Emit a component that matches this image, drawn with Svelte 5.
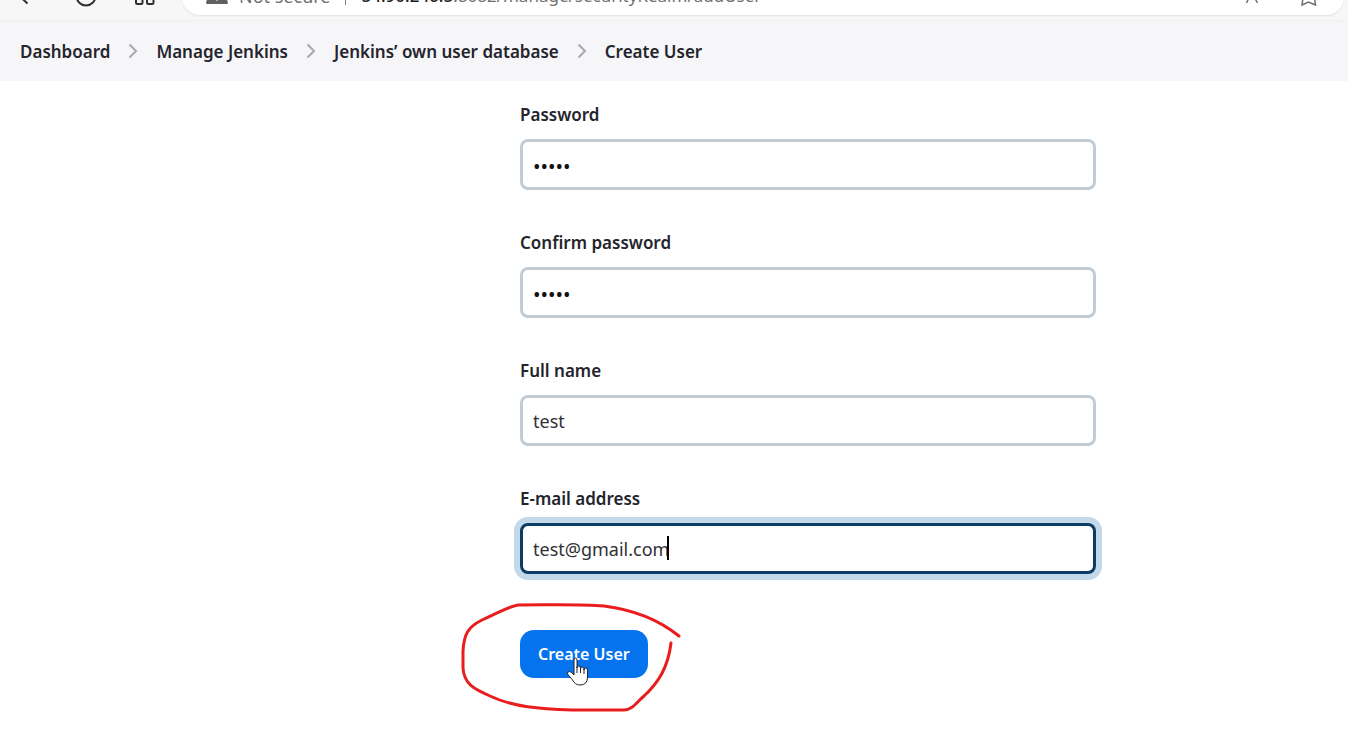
<script>
  const crumbs = ['Dashboard', 'Manage Jenkins', 'Jenkins’ own user database', 'Create User'];
  let password = $state('admin');
  let confirm = $state('admin');
  let fullName = $state('test');
  let email = $state('test@gmail.com');
</script>

<div class="page">
  <div class="browser">
    <div class="tools">
      <button aria-label="Back"><svg width="24" height="20" viewBox="0 0 24 20"><path d="M13.500 -7 6 -2.500 12.500 3.500" /></svg></button>
      <button aria-label="Refresh"><svg width="24" height="20" viewBox="0 0 24 20"><circle cx="12" cy="-4" r="9.500" /></svg></button>
      <button aria-label="Apps"><svg width="24" height="20" viewBox="0 0 24 20"><rect x="3" y="-5" width="6.500" height="9" rx="1.500" /><rect x="14" y="-5" width="6.500" height="9" rx="1.500" /></svg></button>
    </div>
    <div class="address">
      <svg class="warn" width="22" height="16" viewBox="0 0 22 16"><path d="M1 5Q-.5 5 .5 2L3-4H19L21.500 2Q22.500 5 21 5Z" /><circle cx="11" cy="0" r="1.500" fill="#fff" /></svg>
      <span class="secure">Not secure</span>
      <span class="bar"></span>
      <span class="url"><b>54.90.246.5</b>:8082/manage/securityRealm/addUser</span>
      <button class="read" aria-label="Read aloud"><svg width="24" height="15" viewBox="0 0 24 15"><path d="M6.500 3 11.500 -8 17.500 3" /></svg></button>
      <button aria-label="Add to favorites"><svg width="24" height="15" viewBox="0 0 24 15"><path d="M6 -2 5 5 11.500 2 18.500 5 17.500 -2" /></svg></button>
    </div>
  </div>

  <nav aria-label="Breadcrumb">
    {#each crumbs as crumb, i}
      {#if i > 0}
        <svg width="10" height="16" viewBox="0 0 10 16"><path d="M1.500 1.500 8 8 1.500 14.500" /></svg>
      {/if}
      <a href="#top">{crumb}</a>
    {/each}
  </nav>

  <main>
    <form onsubmit={(e) => e.preventDefault()}>
      <div class="field">
        <label for="password">Password</label>
        <input id="password" type="password" autocomplete="off" bind:value={password} />
      </div>
      <div class="field">
        <label for="confirm">Confirm password</label>
        <input id="confirm" type="password" autocomplete="off" bind:value={confirm} />
      </div>
      <div class="field">
        <label for="fullname">Full name</label>
        <input id="fullname" type="text" bind:value={fullName} />
      </div>
      <div class="field">
        <label for="email">E-mail address</label>
        <div class="active">
          <input id="email" type="text" bind:value={email} />
          <span class="caret"></span>
        </div>
      </div>
      <div class="submit">
        <button type="submit">Create User</button>
        <svg class="ring" width="226" height="112" viewBox="0 0 226 112"><path d="M219 35C199 19 176 9 144 5C120 3 90 4 59 4C49 5 40 11 22 19C8 26 4 33 3 50V67C4 83 14 88 30 95C53 106 80 108 112 109H164C172 109 176 102 184 95C198 82 208 67 211 42" /></svg>
        <svg class="hand" width="24" height="30" viewBox="0 0 24 30"><path d="M8 16V3Q8 1 9.500 1T11 3V11Q11 9 12.800 9T14.500 11V12Q14.500 10 16.300 10T18 12V13Q18 11 19.700 11T21.500 13V20Q21.500 28 14 28Q9 28 6.500 23L1.500 17Q1 14.500 3.500 14.500Q5 14.500 8 18Z" /><path d="M11 10V16M14.500 11V16M18 12V17" /></svg>
      </div>
    </form>
  </main>
</div>

<style>
  :global(body) {
    margin: 0;
    background: #fff;
  }
  .page {
    min-height: 100vh;
    font-family: "Noto Sans", "Open Sans", sans-serif;
    font-size: 18px;
    color: #24242c;
  }
  button {
    font: inherit;
    border: 0;
    padding: 0;
    background: none;
  }
  .browser {
    display: flex;
    height: 20px;
    padding-right: 4px;
    overflow: hidden;
    background: #f7f7f7;
    border-bottom: 1px solid #f0f0f1;
  }
  .browser svg {
    display: block;
    fill: none;
    stroke: #303030;
    stroke-width: 2;
  }
  .tools {
    display: flex;
    gap: 35px;
    padding: 0 25px 0 15px;
  }
  .address {
    flex: 1;
    display: flex;
    align-items: flex-end;
    height: 36px;
    margin-top: -21px;
    padding: 0 23px 0 24px;
    box-sizing: border-box;
    border-radius: 24px;
    background: #fff;
    box-shadow: 0 1px 2px #e2e2e2;
    color: #707070;
    white-space: nowrap;
  }
  .browser .warn {
    fill: #606060;
    stroke: none;
    margin-right: 11px;
  }
  .address span {
    line-height: 24px;
  }
  .secure, .url {
    padding-bottom: 7px;
  }
  .url {
    flex: 1;
    font-size: 17px;
  }
  .address .bar {
    width: 1px;
    height: 20px;
    margin: 0 16px 10px 14px;
    background: #808080;
  }
  .url b {
    font-weight: 500;
    color: #202020;
  }
  .address button svg {
    stroke: #707070;
    stroke-width: 1.5;
  }
  .read {
    margin-right: 33px;
  }
  nav {
    display: flex;
    align-items: center;
    gap: 18px;
    height: 60px;
    padding: 0 20px;
    background: #f6f6f9;
    font-size: 17px;
    font-weight: 600;
  }
  nav a {
    color: inherit;
    text-decoration: none;
  }
  nav svg {
    fill: none;
    stroke: #a8a8ae;
    stroke-width: 2;
  }
  form {
    display: flex;
    flex-direction: column;
    gap: 41px;
    width: 43%;
    max-width: 576px;
    margin-left: 520px;
    padding: 22px 0 48px;
  }
  .field {
    display: flex;
    flex-direction: column;
    gap: 12px;
  }
  label {
    line-height: 24px;
    font-size: 17px;
    font-weight: 600;
  }
  input {
    box-sizing: border-box;
    display: block;
    width: 100%;
    height: 51px;
    padding: 0 10px;
    border: 3px solid #c3ccd5;
    border-radius: 8px;
    background: #fff;
    font: inherit;
    color: #303036;
    outline: 0;
  }
  input[type="password"] {
    padding-top: 4px;
    font-size: 20px;
    color: #101014;
  }
  .active {
    position: relative;
  }
  .active input {
    border-color: #0b3d66;
    box-shadow: 0 0 0 6px #c3d9ea;
  }
  .caret {
    position: absolute;
    left: 147px;
    top: 13px;
    width: 2px;
    height: 24px;
    background: #000;
  }
  .submit {
    position: relative;
    margin-top: 15px;
  }
  .submit button {
    height: 48px;
    padding: 0 18px;
    border-radius: 14px;
    background: #0573ee;
    color: #fff;
    font-size: 16px;
    font-weight: 600;
    cursor: pointer;
  }
  .ring, .hand {
    position: absolute;
    pointer-events: none;
  }
  .ring {
    left: -60px;
    top: -29px;
    fill: none;
    stroke: #e91d1d;
    stroke-width: 3;
    stroke-linecap: round;
    stroke-linejoin: round;
  }
  .hand {
    left: 46px;
    top: 27px;
    fill: #fff;
    stroke: #20242c;
    stroke-width: 1;
  }
</style>
